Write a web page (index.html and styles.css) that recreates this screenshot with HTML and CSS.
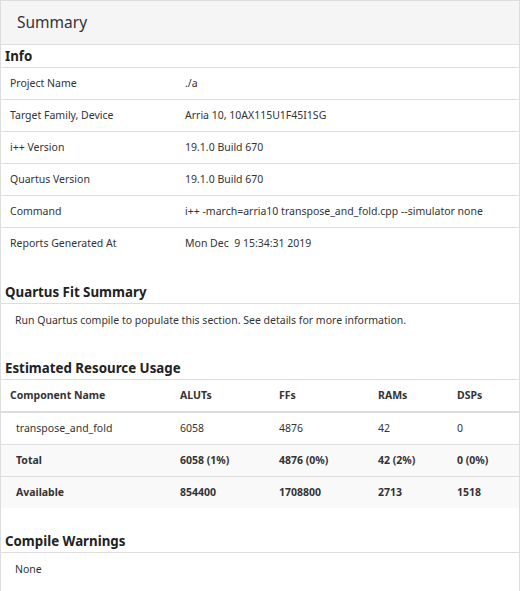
FILE: index.html
```html
<!DOCTYPE html>
<html>
<head>
<meta charset="utf-8">
<link rel="stylesheet" href="styles.css">
</head>
<body>
<div class="panel">
  <div class="panel-heading">Summary</div>
  <div class="panel-body">
    <h3 class="sec-title">Info</h3>
    <div class="info">
      <div class="info-row"><div class="lbl">Project Name</div><div class="val">./a</div></div>
      <div class="info-row"><div class="lbl">Target Family, Device</div><div class="val">Arria 10, 10AX115U1F45I1SG</div></div>
      <div class="info-row"><div class="lbl">i++ Version</div><div class="val">19.1.0 Build 670</div></div>
      <div class="info-row"><div class="lbl">Quartus Version</div><div class="val">19.1.0 Build 670</div></div>
      <div class="info-row"><div class="lbl">Command</div><div class="val">i++ -march=arria10 transpose_and_fold.cpp --simulator none</div></div>
      <div class="info-row last"><div class="lbl">Reports Generated At</div><div class="val">Mon Dec&nbsp; 9 15:34:31 2019</div></div>
    </div>

    <h3 class="sec-title gap">Quartus Fit Summary</h3>
    <div class="note">Run Quartus compile to populate this section. See details for more information.</div>

    <h3 class="sec-title gap">Estimated Resource Usage</h3>
    <div class="res">
      <div class="res-row head">
        <div class="c first">Component Name</div><div class="c">ALUTs</div><div class="c">FFs</div><div class="c">RAMs</div><div class="c">DSPs</div>
      </div>
      <div class="res-row">
        <div class="c first body">transpose_and_fold</div><div class="c">6058</div><div class="c">4876</div><div class="c">42</div><div class="c">0</div>
      </div>
      <div class="res-row sum">
        <div class="c first body">Total</div><div class="c">6058 (1%)</div><div class="c">4876 (0%)</div><div class="c">42 (2%)</div><div class="c">0 (0%)</div>
      </div>
      <div class="res-row sum last">
        <div class="c first body">Available</div><div class="c">854400</div><div class="c">1708800</div><div class="c">2713</div><div class="c">1518</div>
      </div>
    </div>

    <h3 class="sec-title gap wide">Compile Warnings</h3>
    <div class="note">None</div>
  </div>
</div>
</body>
</html>
```

FILE: styles.css
```css
html, body {
  margin: 0;
  padding: 0;
  background: #fff;
}
body {
  font-family: "Noto Sans", "Open Sans", sans-serif;
  font-size: 10.5px;
  color: #333;
}
.panel {
  width: 518px;
  border: 1px solid #ddd;
  border-bottom: none;
  height: 600px;
}
.panel-heading {
  height: 43px;
  background: #f5f5f5;
  border-bottom: 1px solid #ddd;
  font-size: 15.5px;
  line-height: 43px;
  padding-left: 16px;
  color: #333;
}
.sec-title {
  margin: 0;
  height: 22px;
  line-height: 22px;
  font-size: 13.3px;
  font-weight: bold;
  padding-left: 4px;
  border-bottom: 1px solid #ddd;
  color: #222;
}
.sec-title.gap {
  margin-top: 21px;
}
.sec-title.gap.wide {
  margin-top: 22px;
}
.info-row {
  display: grid;
  grid-template-columns: 175px 1fr;
  height: 31px;
  line-height: 31px;
  border-bottom: 1px solid #ddd;
}
.info-row.last {
  border-bottom: none;
  height: 32px;
}
.lbl {
  padding-left: 9px;
}
.val {
  padding-left: 9px;
  white-space: nowrap;
}
.note {
  height: 32px;
  line-height: 32px;
  padding-left: 14px;
}
.res-row {
  display: grid;
  grid-template-columns: 169px 99px 99px 79px 1fr;
  height: 31px;
  line-height: 31px;
  border-bottom: 1px solid #ddd;
}
.res-row.head {
  font-weight: bold;
  border-bottom: 2px solid #ddd;
}
.res-row.sum {
  background: #f9f9f9;
  font-weight: bold;
}
.res-row.last {
  border-bottom: none;
  height: 31px;
}
.c {
  padding-left: 10px;
  white-space: nowrap;
}
.c.first {
  padding-left: 9px;
}
.c.first.body {
  padding-left: 15px;
}
```
